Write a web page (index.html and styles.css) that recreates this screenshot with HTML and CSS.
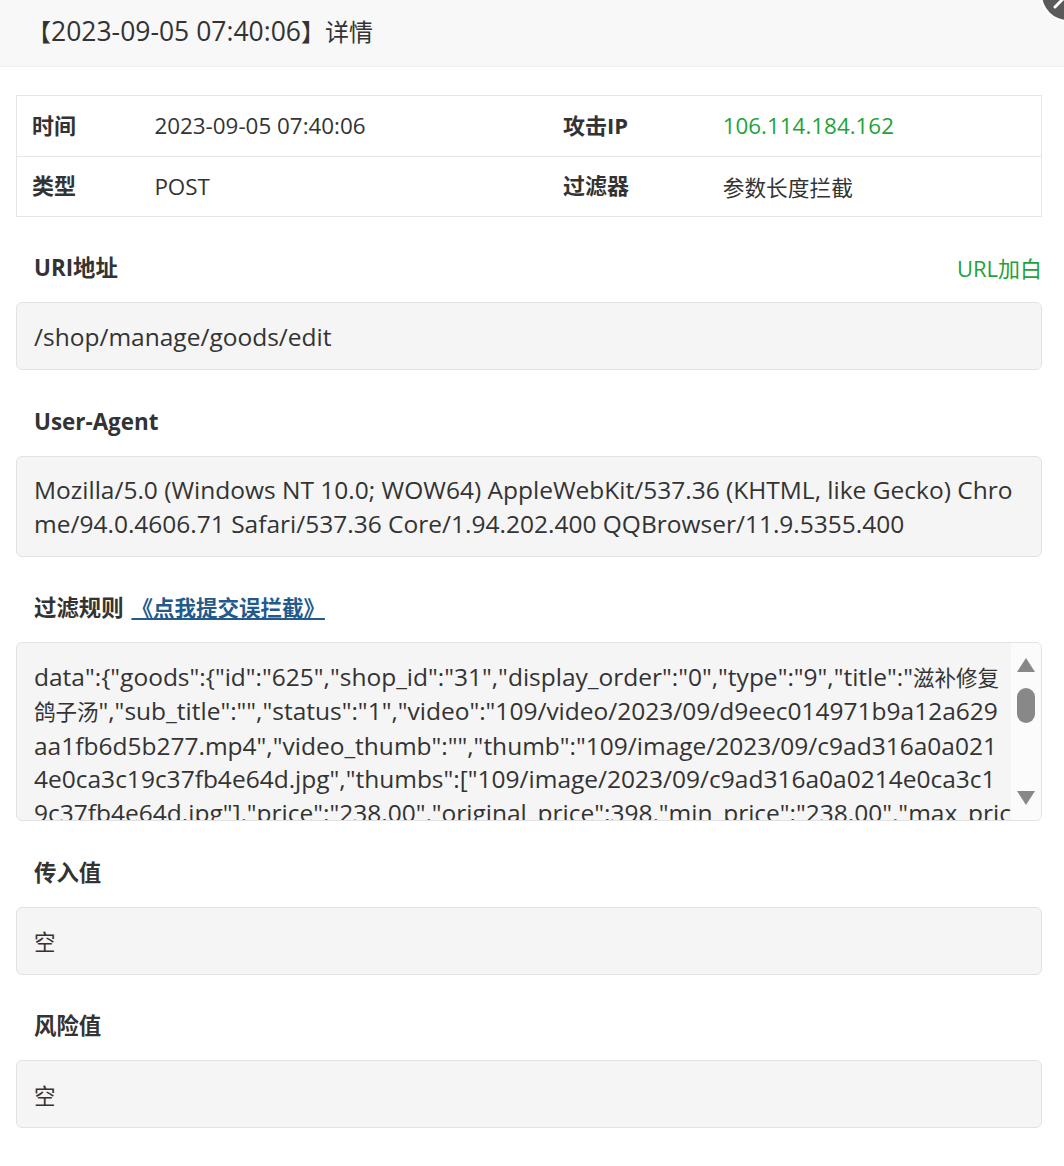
FILE: index.html
```html
<!DOCTYPE html>
<html lang="zh-CN">
<head>
<meta charset="utf-8">
<title>详情</title>
<link rel="stylesheet" href="styles.css">
</head>
<body>
<div class="layer">
  <div class="layer-title">
    <span class="title-text"><span class="zh">【</span>2023-09-05 07:40:06<span class="zh">】详情</span></span>
    <span class="layer-close"><svg width="52" height="52" viewBox="0 0 52 52"><line x1="26" y1="26" x2="13" y2="39" stroke="#fff" stroke-width="3" stroke-linecap="round"/><line x1="26" y1="26" x2="39" y2="13" stroke="#fff" stroke-width="3" stroke-linecap="round"/><line x1="26" y1="26" x2="13" y2="13" stroke="#fff" stroke-width="3" stroke-linecap="round"/></svg></span>
  </div>
  <div class="layer-content">
    <table class="info">
      <colgroup><col class="c1"><col class="c2"><col class="c3"><col class="c4"></colgroup>
      <tr>
        <th>时间</th><td>2023-09-05 07:40:06</td>
        <th>攻击IP</th><td class="green">106.114.184.162</td>
      </tr>
      <tr>
        <th>类型</th><td>POST</td>
        <th>过滤器</th><td class="td-zh">参数长度拦截</td>
      </tr>
    </table>

    <div class="field">
      <div class="field-head"><span class="label">URI地址</span><a class="action" href="#">URL加白</a></div>
      <div class="box">/shop/manage/goods/edit</div>
    </div>

    <div class="field">
      <div class="field-head"><span class="label">User-Agent</span></div>
      <div class="box box-two">Mozilla/5.0 (Windows NT 10.0; WOW64) AppleWebKit/537.36 (KHTML, like Gecko) Chro<br>me/94.0.4606.71 Safari/537.36 Core/1.94.202.400 QQBrowser/11.9.5355.400</div>
    </div>

    <div class="field">
      <div class="field-head"><span class="label">过滤规则 <a class="link" href="#">《点我提交误拦截》</a></span></div>
      <div class="box scroll-box">
        <div class="scroll-text">data":{"goods":{"id":"625","shop_id":"31","display_order":"0","type":"9","title":"<span class="zh">滋补修复</span><br><span class="zh">鸽子汤</span>","sub_title":"","status":"1","video":"109/video/2023/09/d9eec014971b9a12a629<br>aa1fb6d5b277.mp4","video_thumb":"","thumb":"109/image/2023/09/c9ad316a0a021<br>4e0ca3c19c37fb4e64d.jpg","thumbs":["109/image/2023/09/c9ad316a0a0214e0ca3c1<br>9c37fb4e64d.jpg"],"price":"238.00","original_price":398,"min_price":"238.00","max_pric</div>
        <div class="scrollbar">
          <span class="arrow up"></span>
          <span class="thumb"></span>
          <span class="track-fill"></span>
          <span class="arrow down"></span>
        </div>
      </div>
    </div>

    <div class="field">
      <div class="field-head"><span class="label">传入值</span></div>
      <div class="box"><span class="zh">空</span></div>
    </div>

    <div class="field">
      <div class="field-head"><span class="label">风险值</span></div>
      <div class="box"><span class="zh">空</span></div>
    </div>
  </div>
</div>
</body>
</html>
```

FILE: styles.css
```css
html, body {
  margin: 0;
  padding: 0;
  background: #fff;
  overflow: hidden;
}
body {
  font-family: "Open Sans", "Noto Sans CJK SC", sans-serif;
  font-size: 22px;
  color: #333;
}
.layer {
  width: 1064px;
}
.layer-title {
  position: relative;
  height: 66px;
  line-height: 62px;
  background: #f8f8f8;
  border-bottom: 1px solid #eeeeee;
  padding-left: 27px;
  font-size: 26.5px;
  color: #333;
}
.layer-title .zh {
  font-size: 24px;
}
.layer-close {
  position: absolute;
  left: 1042px;
  top: -32px;
  width: 52px;
  height: 52px;
  border-radius: 50%;
  background: #5a5a5a;
  box-shadow: 0 0 0 2px #fff;
  display: block;
}
.layer-close svg {
  display: block;
}
.layer-content {
  padding: 28px 22px 0 16px;
}
.info {
  width: 1026px;
  border-collapse: collapse;
  border: 1px solid #e6e6e6;
  margin-bottom: 34px;
}
.info col.c1 { width: 123px; }
.info col.c2 { width: 409px; }
.info col.c3 { width: 160px; }
.info col.c4 { width: 334px; }
.info th, .info td {
  height: 60.5px;
  padding: 0 15px;
  text-align: left;
  border-bottom: 1px solid #e6e6e6;
  box-sizing: border-box;
}
.info td {
  font-size: 22.4px;
}
.info td.td-zh {
  font-size: 21.7px;
}
.info th {
  font-weight: 700;
  padding-bottom: 4px;
}
.green {
  color: #1fa339;
}
.field {
  margin-bottom: 34.5px;
}
.field-head {
  display: flex;
  justify-content: space-between;
  align-items: center;
  height: 34px;
  line-height: 34px;
  padding-left: 18px;
  margin-bottom: 17px;
}
.label {
  font-weight: 700;
  font-size: 22.4px;
}
.action {
  color: #1fa339;
  text-decoration: none;
}
.link {
  color: #235a8c;
  text-decoration: underline;
  margin-left: 2px;
  font-size: 21.5px;
}
.box {
  box-sizing: border-box;
  background: #f5f5f5;
  border: 1px solid #e2e2e2;
  border-radius: 6px;
  padding: 16.5px 17px;
  line-height: 33.5px;
  height: 68px;
  font-size: 24.5px;
}
.box .zh {
  font-size: 21.5px;
}
.box.box-two {
  height: 101px;
}
.box.scroll-box {
  display: flex;
  height: 179px;
  padding: 0;
  overflow: hidden;
}
.scroll-text {
  flex: 1;
  padding: 16.5px 0 0 17px;
  white-space: nowrap;
  overflow: hidden;
}
.scrollbar {
  width: 30px;
  flex: none;
  background: #fbfbfb;
  display: flex;
  flex-direction: column;
  align-items: center;
  padding-top: 15px;
  padding-bottom: 15px;
  box-sizing: border-box;
}
.arrow {
  width: 0;
  height: 0;
  border-left: 9px solid transparent;
  border-right: 9px solid transparent;
}
.arrow.up {
  border-bottom: 14px solid #888;
}
.arrow.down {
  border-top: 14px solid #888;
}
.thumb {
  width: 18px;
  height: 35px;
  border-radius: 9px;
  background: #888;
  margin-top: 16px;
}
.track-fill {
  flex: 1;
}
```
